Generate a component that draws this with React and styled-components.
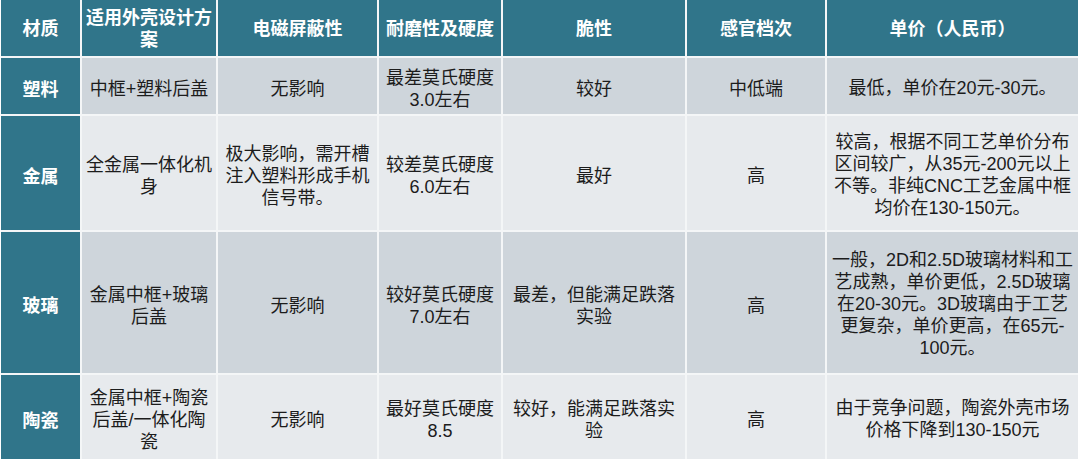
import React from "react";
import styled, { createGlobalStyle } from "styled-components";

const Global = createGlobalStyle`
  html, body { margin: 0; padding: 0; background: #ffffff; }
  body { font-family: "Liberation Sans", "Noto Sans CJK SC", sans-serif; }
`;

const Page = styled.div`
  padding: 0 2px 0 1px;
  width: 1080px;
  box-sizing: border-box;
`;

const Table = styled.div`
  display: grid;
  grid-template-columns: 79px 134px 159px 122px 182px 138px 251px;
  grid-template-rows: 56px 56px 114px 141px 84px;
  column-gap: 2px;
  row-gap: 2px;
  background: #f4f6f7;
`;

const HeadCell = styled.div`
  background: #30758a;
  color: #ffffff;
  font-weight: 700;
  font-size: 18px;
  line-height: 22px;
  display: flex;
  align-items: center;
  justify-content: center;
  text-align: center;
  padding: 1px 4px 0;
  white-space: nowrap;
`;

const RowHead = styled(HeadCell)`
  padding-top: 7px;
`;

const Cell = styled.div`
  background: ${(p) => (p.$shade ? "#ced5db" : "#e7eaed")};
  color: #1c1c1c;
  font-size: 18px;
  line-height: 22px;
  display: flex;
  align-items: center;
  justify-content: center;
  text-align: center;
  white-space: nowrap;
  padding: ${(p) => (p.$wide ? "3px" : "6px")} 2px 0;
`;

const headers = [
  ["材质"],
  ["适用外壳设计方", "案"],
  ["电磁屏蔽性"],
  ["耐磨性及硬度"],
  ["脆性"],
  ["感官档次"],
  ["单价（人民币）"],
];

const rows = [
  {
    name: "塑料",
    cells: [
      ["中框+塑料后盖"],
      ["无影响"],
      ["最差莫氏硬度", "3.0左右"],
      ["较好"],
      ["中低端"],
      ["最低，单价在20元-30元。"],
    ],
  },
  {
    name: "金属",
    cells: [
      ["全金属一体化机", "身"],
      ["极大影响，需开槽", "注入塑料形成手机", "信号带。"],
      ["较差莫氏硬度", "6.0左右"],
      ["最好"],
      ["高"],
      [
        "较高，根据不同工艺单价分布",
        "区间较广，从35元-200元以上",
        "不等。非纯CNC工艺金属中框",
        "均价在130-150元。",
      ],
    ],
  },
  {
    name: "玻璃",
    cells: [
      ["金属中框+玻璃", "后盖"],
      ["无影响"],
      ["较好莫氏硬度", "7.0左右"],
      ["最差，但能满足跌落", "实验"],
      ["高"],
      [
        "一般，2D和2.5D玻璃材料和工",
        "艺成熟，单价更低，2.5D玻璃",
        "在20-30元。3D玻璃由于工艺",
        "更复杂，单价更高，在65元-",
        "100元。",
      ],
    ],
  },
  {
    name: "陶瓷",
    cells: [
      ["金属中框+陶瓷", "后盖/一体化陶", "瓷"],
      ["无影响"],
      ["最好莫氏硬度", "8.5"],
      ["较好，能满足跌落实", "验"],
      ["高"],
      ["由于竞争问题，陶瓷外壳市场", "价格下降到130-150元"],
    ],
  },
];

const Lines = ({ lines }) =>
  lines.map((l, i) => (
    <React.Fragment key={i}>
      {i > 0 && <br />}
      {l}
    </React.Fragment>
  ));

export default function App() {
  return (
    <>
      <Global />
      <Page>
        <Table>
          {headers.map((h, i) => (
            <HeadCell key={i}>
              <div>
                <Lines lines={h} />
              </div>
            </HeadCell>
          ))}
          {rows.map((r, ri) => (
            <React.Fragment key={ri}>
              <RowHead>{r.name}</RowHead>
              {r.cells.map((c, ci) => (
                <Cell key={ci} $shade={ri % 2 === 0} $wide={ci === 5}>
                  <div>
                    <Lines lines={c} />
                  </div>
                </Cell>
              ))}
            </React.Fragment>
          ))}
        </Table>
      </Page>
    </>
  );
}
